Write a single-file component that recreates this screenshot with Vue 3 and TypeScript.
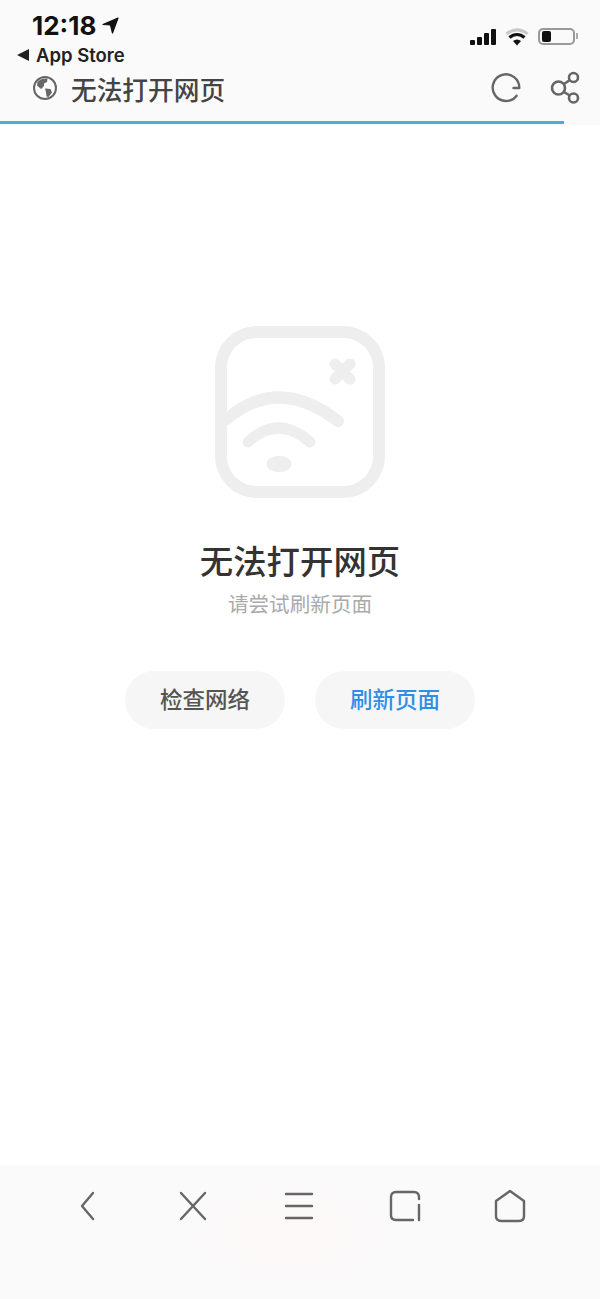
<template>
  <div class="page">
    <header class="top">
      <div class="status">
        <div class="status-left">
          <div class="time">
            12:18
            <svg class="loc" width="17" height="17" viewBox="0 0 17 17">
              <path d="M1 7.500 16 1 10.500 16 8.500 8Z" fill="#111" stroke="#111" stroke-width="1.200" stroke-linejoin="round" />
            </svg>
          </div>
          <div class="back-app">
            <span class="tri"></span>
            App Store
          </div>
        </div>
        <div class="status-right">
          <div class="signal">
            <i v-for="h in signalBars" :key="h" :style="{ height: h + 'px' }"></i>
          </div>
          <svg width="24" height="18" viewBox="0 0 24 18">
            <path d="M1.500 6C8 0.500 16 0.500 22.500 6" fill="none" stroke="#c9c9c9" stroke-width="3.200" />
            <path d="M4.500 9.500C9 5.500 15 5.500 19.500 9.500" fill="none" stroke="#111" stroke-width="3.200" />
            <path d="M8 13C10.500 11 13.500 11 16 13L12 17.500Z" fill="#111" />
          </svg>
          <div class="battery"><span></span></div>
        </div>
      </div>
      <div class="title-row">
        <svg class="globe" width="26" height="26" viewBox="0 0 26 26">
          <circle cx="13" cy="13" r="11" fill="#fafafa" stroke="#666" stroke-width="2" />
          <path d="M5.500 7C8 4 12 3 15.500 3.500L15 7 12 8.500 12 11 9 14 5 10.500Z" fill="#666" />
          <path d="M13 13.500 18.500 14 20 17.500 16.500 22 14.500 21.500 14 17.500Z" fill="#666" />
        </svg>
        <span class="page-name">无法打开网页</span>
        <svg class="refresh" width="32" height="32" viewBox="0 0 32 32">
          <path d="M26.600 23.700A13.300 13.300 0 1 1 29.300 16H23.500" fill="none" stroke="#666" stroke-width="2.400" stroke-linecap="round" stroke-linejoin="round" />
        </svg>
        <svg width="32" height="34" viewBox="0 0 32 34">
          <circle cx="9.500" cy="17" r="6.500" fill="none" stroke="#666" stroke-width="2.600" />
          <circle cx="24.500" cy="6.500" r="4.500" fill="none" stroke="#666" stroke-width="2.600" />
          <circle cx="24.500" cy="27" r="4.500" fill="none" stroke="#666" stroke-width="2.600" />
          <path d="M15 13 20.800 9M15 21 20.800 24.500" stroke="#666" stroke-width="2.600" />
        </svg>
      </div>
      <div class="progress"></div>
    </header>

    <main class="content">
      <svg class="wifi-off" width="180" height="180" viewBox="0 0 180 180">
        <rect x="11" y="10" width="158" height="160" rx="36" fill="none" stroke="#eeeeee" stroke-width="12" />
        <path d="M125 42 140 57M140 42 125 57" stroke="#eeeeee" stroke-width="11" stroke-linecap="round" />
        <path d="M17 97Q68 53 128 99" fill="none" stroke="#eeeeee" stroke-width="12" stroke-linecap="round" />
        <path d="M38 120Q68 92 100 120" fill="none" stroke="#eeeeee" stroke-width="11" stroke-linecap="round" />
        <ellipse cx="69" cy="142" rx="12.500" ry="8" fill="#eeeeee" />
      </svg>
      <h1 class="err-title">无法打开网页</h1>
      <p class="err-sub">请尝试刷新页面</p>
      <div class="actions">
        <button type="button" class="btn">检查网络</button>
        <button type="button" class="btn btn-blue">刷新页面</button>
      </div>
    </main>

    <nav class="bottom">
      <svg v-for="icon in navIcons" :key="icon.name" width="36" height="36" viewBox="0 0 36 36">
        <path :d="icon.d" fill="none" stroke="#666" stroke-width="2.400" stroke-linecap="round" stroke-linejoin="round" />
      </svg>
    </nav>
  </div>
</template>

<script setup lang="ts">
const signalBars = [5, 8, 12, 16]

const navIcons = [
  { name: 'back', d: 'M23 5 12 18 23 31' },
  { name: 'close', d: 'M6 5 30 31M30 5 6 31' },
  { name: 'menu', d: 'M5 6H31M5 18H31M5 30H31' },
  { name: 'tabs', d: 'M32 11V9Q32 4 27 4H9Q4 4 4 9V27Q4 32 9 32H26M32 17V32' },
  { name: 'home', d: 'M18 3 32 13V28Q32 33 27 33H9Q4 33 4 28V13Z' },
]
</script>

<style scoped>
.page {
  width: 600px;
  height: 1299px;
  display: flex;
  flex-direction: column;
  background: #fff;
  font-family: "Noto Sans CJK SC", sans-serif;
}

.top {
  height: 125px;
  background: #fafafa;
  display: flex;
  flex-direction: column;
}

.status {
  height: 69px;
  display: flex;
  justify-content: space-between;
  padding: 10px 25px 0 17px;
  box-sizing: border-box;
}

.time {
  display: flex;
  align-items: center;
  gap: 6px;
  padding-left: 15px;
  height: 30px;
  font: 700 26px "Inter", sans-serif;
  color: #111;
}

.back-app {
  display: flex;
  align-items: center;
  gap: 7px;
  margin-top: 4px;
  height: 22px;
  font: 600 18.500px "Inter", sans-serif;
  color: #222;
}

.tri {
  width: 0;
  height: 0;
  border-top: 6px solid transparent;
  border-bottom: 6px solid transparent;
  border-right: 12px solid #222;
}

.status-right {
  display: flex;
  align-items: flex-start;
  gap: 9px;
  padding-top: 18px;
}

.signal {
  display: flex;
  align-items: flex-end;
  gap: 2px;
  height: 17px;
}

.signal i {
  width: 5px;
  border-radius: 1px;
  background: #111;
}

.battery {
  position: relative;
  width: 37px;
  height: 17px;
  box-sizing: border-box;
  border: 2px solid #999;
  border-radius: 5px;
  padding: 1px 2px;
}

.battery span {
  display: block;
  width: 9px;
  height: 100%;
  border-radius: 2px;
  background: #111;
}

.battery::after {
  content: "";
  position: absolute;
  right: -5px;
  top: 3px;
  width: 2px;
  height: 6px;
  background: #aaa;
}

.title-row {
  height: 38px;
  display: flex;
  align-items: center;
  padding: 0 19px 0 32px;
}

.page-name {
  margin-left: 13px;
  flex: 1;
  font-size: 25.700px;
  font-weight: 500;
  color: #444;
}

.refresh {
  margin-right: 27px;
}

.progress {
  width: 564px;
  height: 3px;
  margin-top: 14px;
  background: #4fadd4;
}

.content {
  flex: 1;
  display: flex;
  flex-direction: column;
  align-items: center;
  padding-top: 197px;
}

.err-title {
  margin: 36px 0 0;
  font-size: 33.400px;
  line-height: 44px;
  font-weight: 500;
  color: #333;
}

.err-sub {
  margin: 6px 0 0;
  font-size: 20.600px;
  line-height: 30px;
  color: #aaa;
}

.actions {
  display: flex;
  gap: 30px;
  margin-top: 53px;
}

.btn {
  width: 160px;
  height: 58px;
  padding: 0 0 4px;
  border: none;
  border-radius: 29px;
  background: #f6f6f6;
  font-family: inherit;
  font-size: 22.500px;
  font-weight: 500;
  color: #555;
}

.btn-blue {
  color: #2f8fe6;
}

.bottom {
  height: 134px;
  box-sizing: border-box;
  padding: 23px 0 0 35px;
  display: grid;
  grid-template-columns: repeat(5, 105.600px);
  justify-items: center;
  align-items: start;
  background: radial-gradient(ellipse 130px 60px at 290px 70px, #fdf8f8, #fafafa);
}
</style>

<style>
body {
  margin: 0;
}
</style>
